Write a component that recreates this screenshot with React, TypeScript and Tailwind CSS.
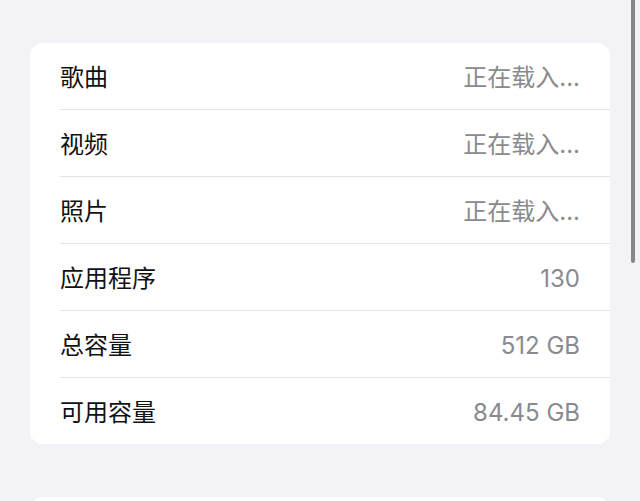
const rows = [
  { label: "歌曲", value: "正在载入..." },
  { label: "视频", value: "正在载入..." },
  { label: "照片", value: "正在载入..." },
  { label: "应用程序", value: "130" },
  { label: "总容量", value: "512 GB" },
  { label: "可用容量", value: "84.45 GB" },
];

export default function App() {
  return (
    <div
      className="relative h-[501px] w-[640px] overflow-hidden bg-[#f2f2f7] px-[30px] pt-[43px]"
      style={{ fontFamily: '"Inter", "Noto Sans CJK SC", sans-serif' }}
    >
      {/* scroll indicator */}
      <div className="absolute right-[5px] top-0 z-10 h-[263px] w-[4px] rounded-b-full bg-[#86868b]" />

      <div className="overflow-hidden rounded-[13px] bg-white">
        {rows.map((row, i) => (
          <div key={row.label} className="pl-[30px]">
            <div
              className={
                "flex items-center justify-between pr-[30px] pt-[3px] " +
                (i < rows.length - 1 ? "h-[67px] border-b border-[#e3e3e7]" : "h-[66px]")
              }
            >
              <span className="text-[24px] leading-none text-[#111111]">{row.label}</span>
              <span className="text-[24px] leading-none text-[#8a8a8e]">{row.value}</span>
            </div>
          </div>
        ))}
      </div>

      <div className="mt-[53px] h-[60px] rounded-[13px] bg-white" />
    </div>
  );
}
